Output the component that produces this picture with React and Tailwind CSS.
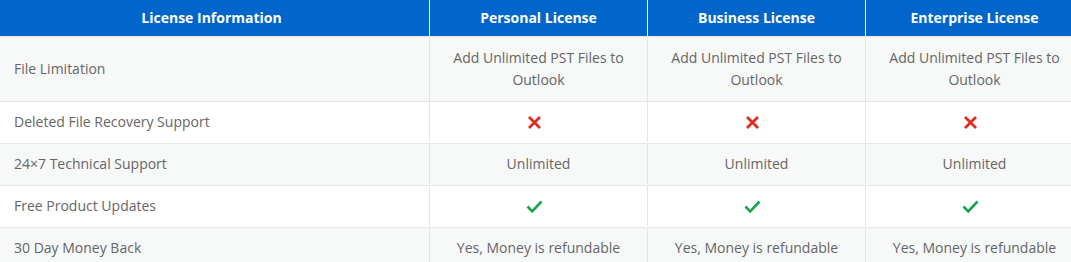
import React from "react";

const Cross = () => (
  <svg width="15" height="15" viewBox="0 0 15 15" aria-hidden="true">
    <path d="M2 2 L13 13 M13 2 L2 13" stroke="#e02b1d" strokeWidth="2.8" strokeLinecap="butt" fill="none" />
  </svg>
);

const Check = () => (
  <svg width="17" height="15" viewBox="0 0 17 15" aria-hidden="true">
    <path d="M1.5 7.5 L6.2 12.3 L15.5 2.5" stroke="#19a34a" strokeWidth="2.6" fill="none" strokeLinejoin="miter" />
  </svg>
);

const rows = [
  { label: "File Limitation", value: "Add Unlimited PST Files to Outlook", tall: true, shade: true },
  { label: "Deleted File Recovery Support", value: "cross", shade: false },
  { label: "24×7 Technical Support", value: "Unlimited", shade: true },
  { label: "Free Product Updates", value: "check", shade: false },
  { label: "30 Day Money Back", value: "Yes, Money is refundable", shade: true },
];

function Cell({ value, tall }) {
  let content;
  let icon = false;
  if (value === "cross") { content = <Cross />; icon = true; }
  else if (value === "check") { content = <Check />; icon = true; }
  else if (tall)
    content = (
      <span className="text-center leading-[22px]">
        Add Unlimited PST Files to
        <br />
        Outlook
      </span>
    );
  else content = <span className="leading-[22px]">{value}</span>;
  return (
    <div className={`w-[218px] shrink-0 border-l border-[#e6e6e6] flex items-center justify-center ${icon ? "pr-[8px]" : ""}`}>
      {content}
    </div>
  );
}

export default function App() {
  return (
    <div className="w-[1071px] h-[262px] overflow-hidden bg-white" style={{ fontFamily: '"Open Sans", "Noto Sans", sans-serif' }}>
      <div className="w-[1084px] text-[14px] text-[#666]">
        <div className="flex h-9 bg-[#0066cc] text-white font-bold">
          <div className="w-[429px] shrink-0 flex items-center justify-center pb-[2px] pr-[6px]">License Information</div>
          <div className="w-[218px] shrink-0 border-l border-white flex items-center justify-center pb-[2px]">Personal License</div>
          <div className="w-[218px] shrink-0 border-l border-white flex items-center justify-center pb-[2px]">Business License</div>
          <div className="w-[218px] shrink-0 border-l border-white flex items-center justify-center pb-[2px]">Enterprise License</div>
        </div>
        {rows.map((r, i) => (
          <div
            key={i}
            className={`flex border-t border-[#e6e6e6] ${r.tall ? "h-[65px]" : "h-[42px] pb-[1px]"} ${r.shade ? "bg-[#f7f8f8]" : "bg-white"}`}
          >
            <div className="w-[429px] shrink-0 flex items-center pl-[14px] leading-[22px]">{r.label}</div>
            <Cell value={r.value} tall={r.tall} />
            <Cell value={r.value} tall={r.tall} />
            <Cell value={r.value} tall={r.tall} />
          </div>
        ))}
      </div>
    </div>
  );
}
